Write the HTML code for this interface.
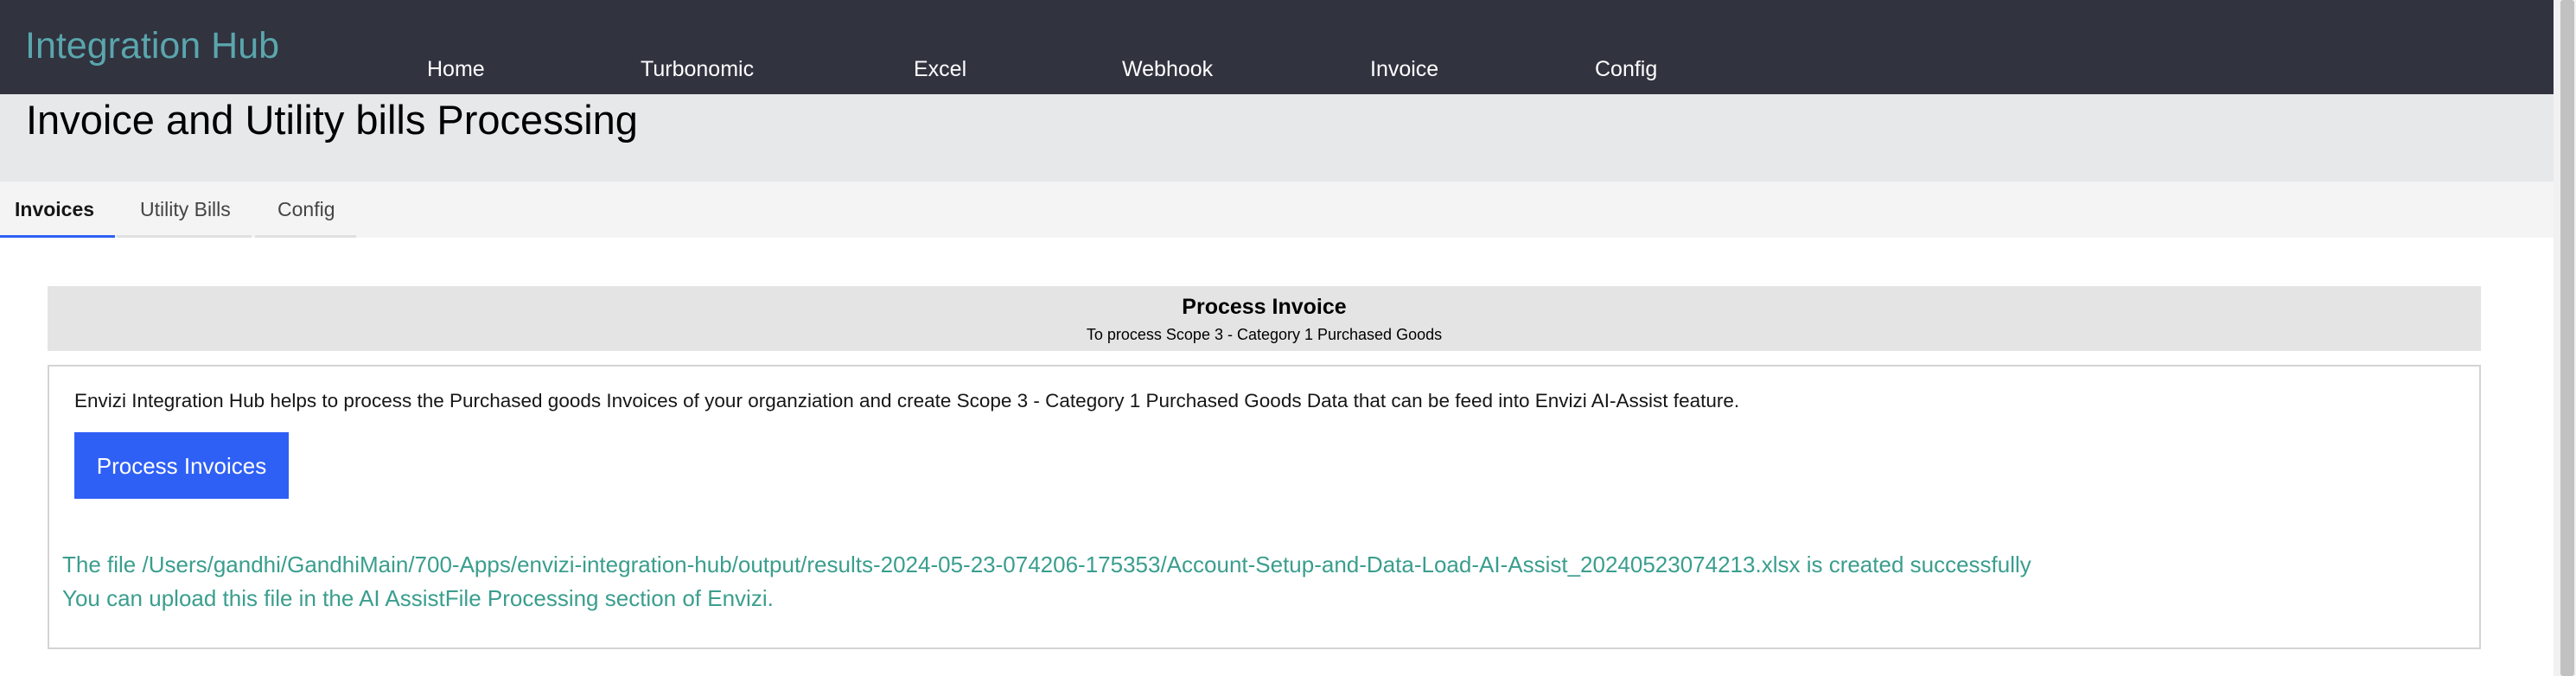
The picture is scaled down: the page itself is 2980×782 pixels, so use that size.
<!DOCTYPE html>
<html><head><meta charset="utf-8"><style>
*{margin:0;padding:0;box-sizing:border-box}
body{width:2980px;height:782px;overflow:hidden;background:#fff;font-family:"Liberation Sans",Arial,sans-serif;position:relative}
.a{position:absolute;white-space:nowrap}
</style></head><body>
<div class="a" style="left:0;top:0;width:2954px;height:109px;background:#31333f"></div>
<div class="a" style="left:29px;top:27px;font-size:43px;color:#5aa6ad;line-height:52px">Integration Hub</div>
<div class="a" style="top:65px;font-size:25px;color:#fff;line-height:30px;left:0;width:2954px">
<span class="a" style="left:494px">Home</span><span class="a" style="left:741px">Turbonomic</span><span class="a" style="left:1057px">Excel</span><span class="a" style="left:1298px">Webhook</span><span class="a" style="left:1585px">Invoice</span><span class="a" style="left:1845px">Config</span></div>
<div class="a" style="left:0;top:109px;width:2954px;height:101px;background:#e7e8ea"></div>
<div class="a" style="left:30px;top:112px;font-size:47px;color:#000;line-height:54px">Invoice and Utility bills Processing</div>
<div class="a" style="left:0;top:210px;width:2954px;height:65px;background:#f4f4f4"></div>
<div class="a" style="left:17px;top:229px;font-size:23px;font-weight:bold;color:#161616">Invoices</div>
<div class="a" style="left:162px;top:229px;font-size:23px;color:#444">Utility Bills</div>
<div class="a" style="left:321px;top:229px;font-size:23px;color:#444">Config</div>
<div class="a" style="left:0;top:272px;width:133px;height:3px;background:#2f60f5"></div>
<div class="a" style="left:135px;top:272px;width:156px;height:3px;background:#e0e0e0"></div>
<div class="a" style="left:295px;top:272px;width:117px;height:3px;background:#e0e0e0"></div>
<div class="a" style="left:55px;top:331px;width:2815px;height:75px;background:#e4e4e4"></div>
<div class="a" style="left:55px;top:341px;width:2815px;text-align:center;font-size:25px;font-weight:bold;line-height:28px">Process Invoice</div>
<div class="a" style="left:55px;top:376px;width:2815px;text-align:center;font-size:18px;line-height:22px">To process Scope 3 - Category 1 Purchased Goods</div>
<div class="a" style="left:55px;top:422px;width:2815px;height:329px;border:2px solid #d4d4d4"></div>
<div class="a" style="left:86px;top:451px;font-size:22.5px;line-height:26px;color:#161616">Envizi Integration Hub helps to process the Purchased goods Invoices of your organziation and create Scope 3 - Category 1 Purchased Goods Data that can be feed into Envizi AI-Assist feature.</div>
<div class="a" style="left:86px;top:500px;width:248px;height:77px;background:#2f60f5;color:#fff;font-size:26px;line-height:79px;text-align:center">Process Invoices</div>
<div class="a" style="left:72px;top:638px;font-size:26px;line-height:30px;color:#3a9e8e">The file /Users/gandhi/GandhiMain/700-Apps/envizi-integration-hub/output/results-2024-05-23-074206-175353/Account-Setup-and-Data-Load-AI-Assist_20240523074213.xlsx is created successfully</div>
<div class="a" style="left:72px;top:677px;font-size:26px;line-height:30px;color:#3a9e8e">You can upload this file in the AI AssistFile Processing section of Envizi.</div>
<div class="a" style="left:2954px;top:0;width:26px;height:782px;background:#f1f1f1"></div>
<div class="a" style="left:2962px;top:0;width:16px;height:782px;background:#c1c1c1;border-radius:3px"></div>
</body></html>
